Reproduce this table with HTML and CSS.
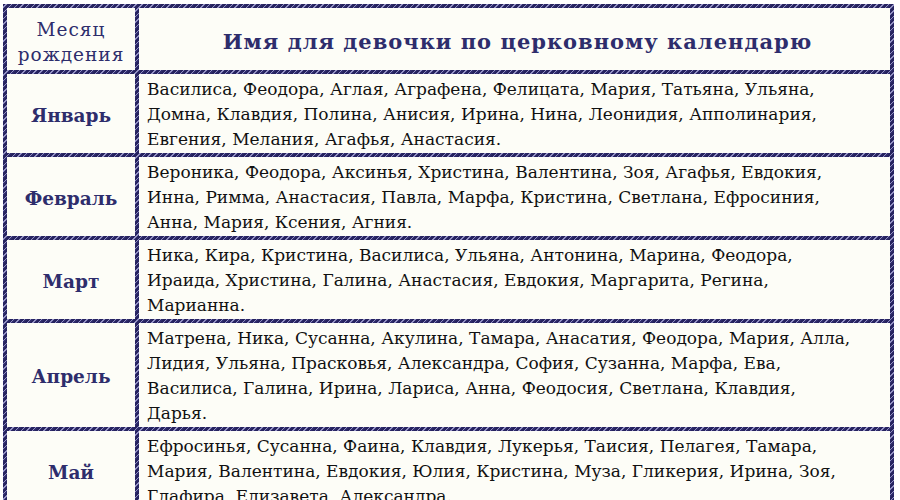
FILE: index.html
```html
<!DOCTYPE html>
<html lang="ru">
<head>
<meta charset="utf-8">
<title>Имя для девочки по церковному календарю</title>
<link rel="stylesheet" href="styles.css">
</head>
<body>
<div class="table">
  <div class="cell head-month">Месяц<br>рождения</div>
  <div class="cell head-title">Имя для девочки по церковному календарю</div>

  <div class="cell month">Январь</div>
  <div class="cell names">Василиса, Феодора, Аглая, Аграфена, Фелицата, Мария, Татьяна, Ульяна,<br>Домна, Клавдия, Полина, Анисия, Ирина, Нина, Леонидия, Апполинария,<br>Евгения, Мелания, Агафья, Анастасия.</div>

  <div class="cell month">Февраль</div>
  <div class="cell names">Вероника, Феодора, Аксинья, Христина, Валентина, Зоя, Агафья, Евдокия,<br>Инна, Римма, Анастасия, Павла, Марфа, Кристина, Светлана, Ефросиния,<br>Анна, Мария, Ксения, Агния.</div>

  <div class="cell month">Март</div>
  <div class="cell names">Ника, Кира, Кристина, Василиса, Ульяна, Антонина, Марина, Феодора,<br>Ираида, Христина, Галина, Анастасия, Евдокия, Маргарита, Регина,<br>Марианна.</div>

  <div class="cell month">Апрель</div>
  <div class="cell names">Матрена, Ника, Сусанна, Акулина, Тамара, Анасатия, Феодора, Мария, Алла,<br>Лидия, Ульяна, Прасковья, Александра, София, Сузанна, Марфа, Ева,<br>Василиса, Галина, Ирина, Лариса, Анна, Феодосия, Светлана, Клавдия,<br>Дарья.</div>

  <div class="cell month">Май</div>
  <div class="cell names">Ефросинья, Сусанна, Фаина, Клавдия, Лукерья, Таисия, Пелагея, Тамара,<br>Мария, Валентина, Евдокия, Юлия, Кристина, Муза, Гликерия, Ирина, Зоя,<br>Глафира, Елизавета, Александра.</div>
</div>
</body>
</html>
```
FILE: styles.css
```css
html, body {
  margin: 0;
  padding: 0;
  background: #ffffff;
  overflow: hidden;
}

body {
  padding: 4px 6px 0 3px;
  font-family: "DejaVu Serif", serif;
}

.table {
  display: grid;
  grid-template-columns: 128px 1fr;
  gap: 4px;
  padding: 4px;
  width: 883px;
  background: repeating-linear-gradient(135deg, #26235f 0 2px, #9391c4 2px 3px, #2f2c6c 3px 4px);
}

.cell {
  background: #fdfdf7;
}

.head-month {
  box-sizing: border-box;
  height: 62px;
  padding-top: 6px;
  display: flex;
  align-items: center;
  justify-content: center;
  text-align: center;
  color: #2e2d6c;
  font-size: 18.5px;
  letter-spacing: 1px;
  line-height: 25px;
}

.head-title {
  box-sizing: border-box;
  height: 62px;
  padding: 4px 0 0 6px;
  display: flex;
  align-items: center;
  justify-content: center;
  color: #2e2d6c;
  font-weight: bold;
  font-size: 21px;
  letter-spacing: 1px;
}

.month {
  display: flex;
  align-items: center;
  justify-content: center;
  padding-top: 3px;
  color: #2e2d6c;
  font-weight: bold;
  font-size: 18.5px;
}

.names {
  padding: 3px 8px 1px 8px;
  color: #111111;
  font-size: 17px;
  line-height: 25px;
  white-space: nowrap;
}
```
